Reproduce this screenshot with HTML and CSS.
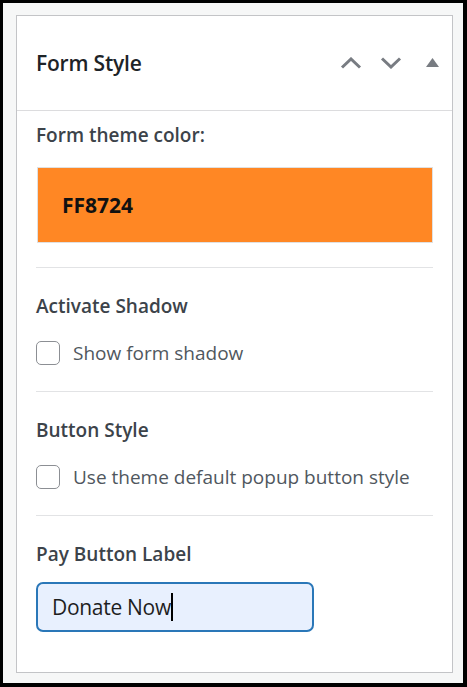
FILE: index.html
```html
<!DOCTYPE html>
<html lang="en">
<head>
<meta charset="utf-8">
<title>Form Style</title>
<link rel="stylesheet" href="styles.css">
</head>
<body>
<div class="frame">
  <div class="panel">
    <div class="panel-header">
      <h2 class="panel-title">Form Style</h2>
      <div class="panel-actions">
        <svg class="icon icon-up" width="22" height="12" viewBox="0 0 22 12"><polyline points="2,10.5 11,2 20,10.5" fill="none" stroke="#787c82" stroke-width="3"/></svg>
        <svg class="icon icon-down" width="22" height="12" viewBox="0 0 22 12"><polyline points="2,1.5 11,10 20,1.5" fill="none" stroke="#787c82" stroke-width="3"/></svg>
        <svg class="icon icon-toggle" width="13" height="9" viewBox="0 0 13 9"><polygon points="0,9 6.5,0 13,9" fill="#787c82"/></svg>
      </div>
    </div>
    <div class="panel-body">
      <div class="field field-first">
        <div class="field-label">Form theme color:</div>
        <div class="swatch">FF8724</div>
      </div>
      <div class="field">
        <div class="field-label">Activate Shadow</div>
        <label class="check-row"><span class="checkbox"></span><span class="check-text">Show form shadow</span></label>
      </div>
      <div class="field">
        <div class="field-label">Button Style</div>
        <label class="check-row"><span class="checkbox"></span><span class="check-text">Use theme default popup button style</span></label>
      </div>
      <div class="field field-last">
        <div class="field-label">Pay Button Label</div>
        <div class="text-input"><span class="input-value">Donate Now</span><span class="caret"></span></div>
      </div>
    </div>
  </div>
</div>
</body>
</html>
```
FILE: styles.css
```css
html, body {
  margin: 0;
  padding: 0;
}
body {
  background: #000;
  width: 467px;
  height: 687px;
  padding: 3px 4px 4px 3px;
  box-sizing: border-box;
  font-family: "Open Sans", "Noto Sans", sans-serif;
}
.frame {
  background: #f6f7f7;
  height: 680px;
  padding: 12px 10px 0 13px;
  box-sizing: border-box;
}
.panel {
  background: #fff;
  border: 1px solid #c3c4c7;
}
.panel-header {
  height: 94px;
  border-bottom: 1px solid #dcdcde;
  display: flex;
  align-items: center;
  padding: 0 13px 0 19px;
}
.panel-title {
  margin: 0;
  flex: 1;
  font-size: 21px;
  font-weight: 600;
  color: #1d2327;
  letter-spacing: -0.2px;
}
.panel-actions {
  display: flex;
  align-items: center;
}
.icon {
  display: block;
}
.icon-down {
  margin-left: 18px;
}
.icon-toggle {
  margin-left: 24px;
  margin-top: -2px;
}
.panel-body {
  padding: 0 19px 0 19px;
}
.field {
  padding: 26px 0 26px;
  border-bottom: 1px solid #e2e3e5;
}
.field-first {
  padding: 12px 0 24px;
}
.field-last {
  border-bottom: 0;
  padding-bottom: 40px;
}
.field-label {
  font-size: 19px;
  line-height: 24px;
  font-weight: 600;
  color: #3c434a;
}
.swatch {
  margin-top: 20px;
  margin-left: 1px;
  height: 74px;
  border: 1px solid #e0e0e0;
  background: #ff8724;
  display: flex;
  align-items: center;
  padding-left: 24px;
  font-size: 21px;
  font-weight: 700;
  color: #111;
}
.check-row {
  margin-top: 23px;
  height: 24px;
  display: flex;
  align-items: center;
}
.checkbox {
  width: 24px;
  height: 24px;
  box-sizing: border-box;
  border: 1px solid #8c8f94;
  border-radius: 5px;
  background: #fff;
  flex: none;
}
.check-text {
  margin-left: 13px;
  font-size: 19px;
  color: #50575e;
}
.text-input {
  margin-top: 16px;
  width: 278px;
  height: 50px;
  box-sizing: border-box;
  border: 2px solid #2a77b8;
  border-radius: 7px;
  background: #e8f0fe;
  display: flex;
  align-items: center;
  padding-left: 14px;
}
.input-value {
  font-size: 21px;
  color: #1e1e1e;
  letter-spacing: -0.3px;
}
.caret {
  width: 2px;
  height: 28px;
  background: #000;
}
```
